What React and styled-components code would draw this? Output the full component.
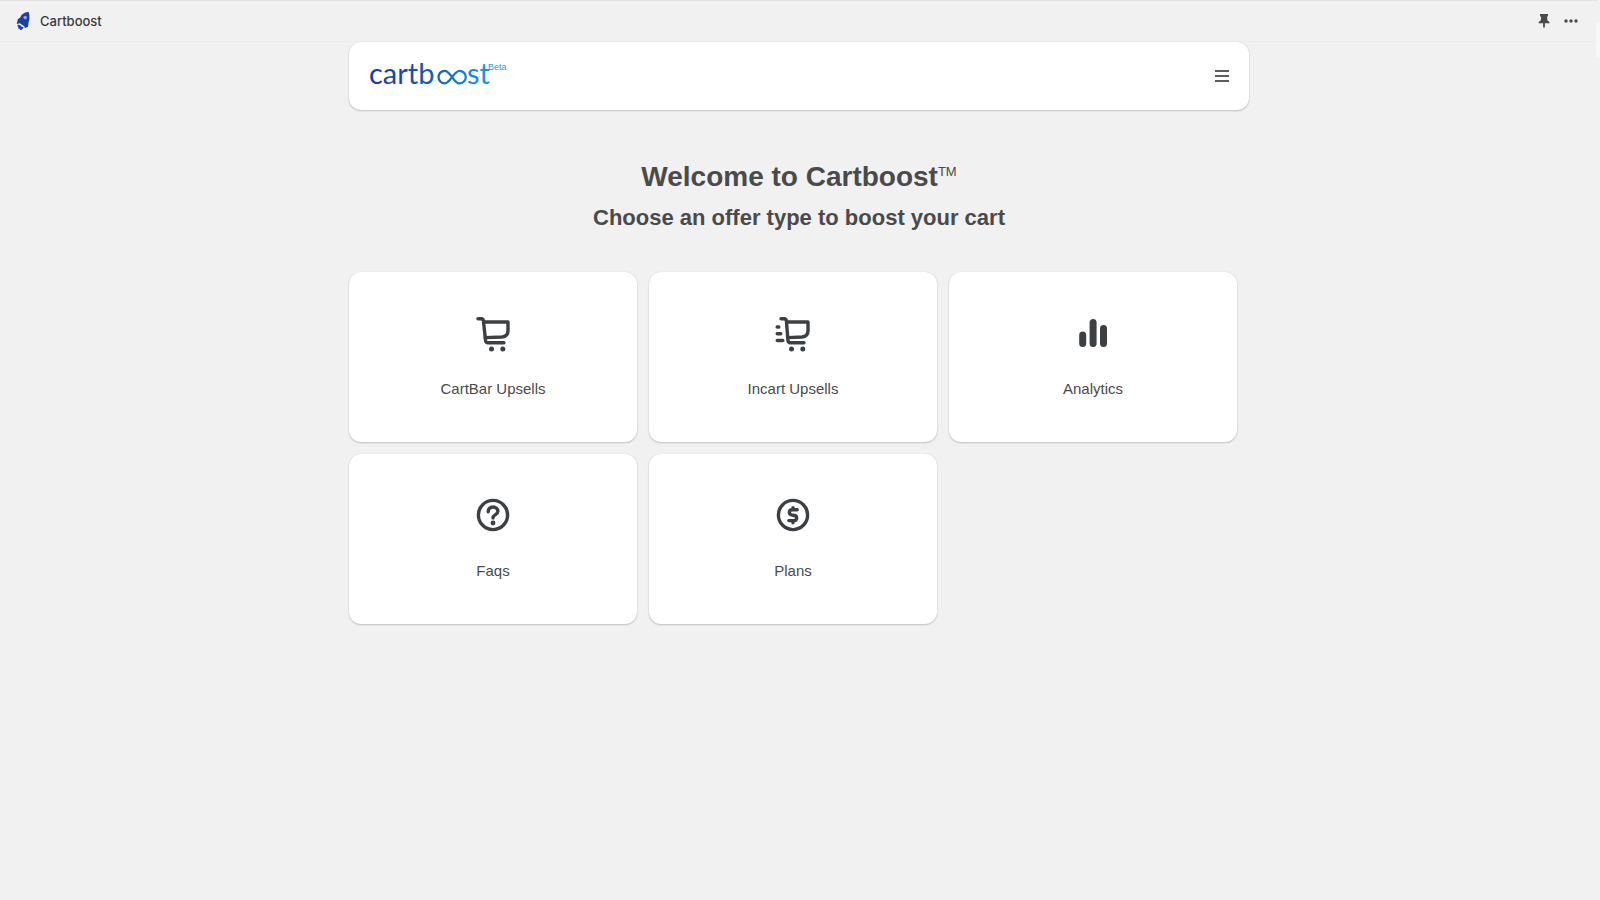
import React from 'react'
import styled, { createGlobalStyle } from 'styled-components'

const menus = [
  { name: 'CartBar Upsells', href: '#cartbar', icon: <CartIcon /> },
  { name: 'Incart Upsells', href: '#incart', icon: <FastCartIcon /> },
  { name: 'Analytics', href: '#analytics', icon: <BarsIcon /> },
  { name: 'Faqs', href: '#faqs', icon: <QuestionIcon /> },
  { name: 'Plans', href: '#plans', icon: <DollarIcon /> },
]

function App() {
  return (
    <StPage>
      <GlobalStyle />
      <StTopBar>
        <StAppName>
          <RocketIcon />
          <span>Cartboost</span>
        </StAppName>
        <StTopActions>
          <StIconButton type="button" aria-label="Pin">
            <PinIcon />
          </StIconButton>
          <StIconButton type="button" aria-label="More">
            <DotsIcon />
          </StIconButton>
        </StTopActions>
      </StTopBar>

      <StContainer>
        <StHeader>
          <Logo />
          <StIconButton type="button" aria-label="Menu">
            <MenuIcon />
          </StIconButton>
        </StHeader>

        <StTitle>
          Welcome to Cartboost<StMark>TM</StMark>
        </StTitle>
        <StSubTitle>Choose an offer type to boost your cart</StSubTitle>

        <StGrid>
          {menus.map((menu) => (
            <StCard key={menu.name} href={menu.href}>
              {menu.icon}
              <StCardName>{menu.name}</StCardName>
            </StCard>
          ))}
        </StGrid>
      </StContainer>
      <StScrollThumb />
    </StPage>
  )
}

export default App

function Logo() {
  return (
    <StLogo width="144" height="32" viewBox="0 0 144 32">
      <defs>
        <linearGradient id="logoColor" gradientUnits="userSpaceOnUse" x1="0" y1="0" x2="120" y2="0">
          <stop offset="0" stopColor="#1a3a9e" />
          <stop offset="0.5" stopColor="#1659b8" />
          <stop offset="1" stopColor="#1b9ae0" />
        </linearGradient>
      </defs>
      <text x="0" y="24" fill="url(#logoColor)">cartb</text>
      <path
        d="M83.300 17.300C80.300 13.300 78.800 10.800 75.800 10.800a6.300 6.300 0 0 0 0 12.600c5.500 0 9-12.600 14.700-12.600a6.300 6.300 0 0 1 0 12.600c-3 0-4.700-2.400-7.200-6.100"
        fill="none"
        stroke="url(#logoColor)"
        strokeWidth="2.300"
      />
      <text x="98" y="24" fill="url(#logoColor)">st</text>
      <StBeta x="119" y="10" fill="#2f97dc">Beta</StBeta>
    </StLogo>
  )
}

function RocketIcon() {
  return (
    <svg width="14" height="20" viewBox="0 0 14 20">
      <path d="M12.800 1C8.800 1 5.600 3 4.200 6.400L1.800 8.200.7 13l3.100-.8 4.700 3.300.2 1.700 3.300-1.400.6-4.400c1.100-2.800 1.200-7 .2-10.400z" fill="#1b3fa8" />
      <path d="M1.300 14c1.200-.7 2.500-.3 3.300.5.700 1 1.700 1.600 3 1.700-.2 1.500-1.500 2.500-3.600 2.800l-.5-1.400-1.400.1.200-1.500z" fill="#1b3fa8" />
      <circle cx="9.200" cy="6.600" r="1.800" fill="#8fa6dc" />
    </svg>
  )
}

function PinIcon() {
  return (
    <svg width="12" height="14" viewBox="0 0 12 14" fill="#4a4a4a">
      <path d="M2 0h8v2.400H9l.4 4c1.300.4 2.200 1.200 2.200 2.800H.6c0-1.600.9-2.400 2.200-2.800l.4-4H2zM5.100 9h1.800v4l-.9 1-.9-1z" />
    </svg>
  )
}

function DotsIcon() {
  return (
    <svg width="14" height="4" viewBox="0 0 14 4" fill="#4a4a4a">
      <circle cx="2" cy="2" r="1.700" />
      <circle cx="7" cy="2" r="1.700" />
      <circle cx="12" cy="2" r="1.700" />
    </svg>
  )
}

function MenuIcon() {
  return (
    <svg width="14" height="14" viewBox="0 0 14 14" fill="#5c5f62">
      <path d="M0 1h14v2H0zM0 6h14v2H0zM0 11h14v2H0z" />
    </svg>
  )
}

function CartIcon() {
  return (
    <StCardIcon viewBox="0 0 40 40">
      <path d="M5 4.800h3.200q2 0 2.200 2l2.200 20q.3 2 2.300 2H31" />
      <path d="M10.800 8H35v8.500q0 6-6 6.500l-16.800.6" />
      <circle cx="18.500" cy="35" r="2.500" />
      <circle cx="29.800" cy="35" r="2.500" />
    </StCardIcon>
  )
}

function FastCartIcon() {
  return (
    <StCardIcon viewBox="0 0 40 40">
      <path d="M8 4.800h3.200q2 0 2.200 2l1.600 20q.3 2 2.300 2H31" />
      <path d="M13.800 8H35v8.500q0 6-6 6.500l-14 .6" />
      <path d="M4.200 13h1.600M4.200 19.800h3.600M4.200 26.500h5.600" />
      <circle cx="18.500" cy="35" r="2.500" />
      <circle cx="29.800" cy="35" r="2.500" />
    </StCardIcon>
  )
}

function BarsIcon() {
  return (
    <StCardIcon viewBox="0 0 40 40">
      <rect x="6.200" y="17.500" width="7" height="15.500" rx="3.500" />
      <rect x="16.600" y="5" width="7" height="28" rx="3.500" />
      <rect x="27" y="11" width="7" height="22" rx="3.500" />
    </StCardIcon>
  )
}

function QuestionIcon() {
  return (
    <StCardIcon viewBox="0 0 40 40">
      <path d="M34.600 19a14.600 14.600 0 1 1-29.200 0a14.600 14.600 0 1 1 29.200 0z" />
      <path d="M15.200 15.800c0-3 2.100-4.800 4.800-4.800s4.900 1.800 4.900 4.300c0 3.400-4.900 3.400-4.900 6.700" />
      <circle cx="20" cy="27" r="2.400" />
    </StCardIcon>
  )
}

function DollarIcon() {
  return (
    <StCardIcon viewBox="0 0 40 40">
      <path d="M34.600 19a14.600 14.600 0 1 1-29.200 0a14.600 14.600 0 1 1 29.200 0z" />
      <path d="M24.200 13.700h-5.400a2.600 2.600 0 0 0-.5 5.100l3.400.7a2.600 2.600 0 0 1-.5 5.100h-5.400M20 11.600v2M20 24.800v2" />
    </StCardIcon>
  )
}

const GlobalStyle = createGlobalStyle`
  * {
    box-sizing: border-box;
  }
  body {
    margin: 0;
    background: #f1f1f1;
    color: #4a4a4a;
    font-family: "Liberation Sans", Arial, sans-serif;
  }
`
const StPage = styled.div`
  position: relative;
  min-height: 100vh;
  padding-right: 2px;
`
const StScrollThumb = styled.div`
  position: absolute;
  top: 22px;
  right: 0;
  width: 4px;
  height: 36px;
  border-radius: 2px;
  background: #f8f8f8;
`
const StTopBar = styled.header`
  height: 42px;
  padding: 0 20px 0 16px;
  border-top: 1px solid #e3e3e3;
  border-bottom: 1px solid #ececec;
  display: flex;
  align-items: center;
  justify-content: space-between;
`
const StAppName = styled.div`
  display: flex;
  align-items: center;
  gap: 10px;
  font-family: Inter, sans-serif;
  font-size: 13px;
  font-weight: 500;
  color: #3a3a3a;
`
const StTopActions = styled.div`
  display: flex;
  align-items: center;
  gap: 14px;
`
const StIconButton = styled.button`
  padding: 0;
  border: none;
  background: none;
  display: flex;
  align-items: center;
  justify-content: center;
  cursor: pointer;
`
const StContainer = styled.main`
  width: 100%;
  max-width: 900px;
  margin: 0 auto;
  padding-bottom: 40px;
`
const StHeader = styled.div`
  height: 68px;
  padding: 0 20px;
  border-radius: 12px;
  background: #ffffff;
  box-shadow: 0 1px 2px rgba(0, 0, 0, 0.2), 0 0 1px rgba(0, 0, 0, 0.14);
  display: flex;
  align-items: center;
  justify-content: space-between;
`
const StLogo = styled.svg`
  font-family: Lato, sans-serif;
  font-size: 29px;
  overflow: visible;
`
const StBeta = styled.text`
  font-family: "Liberation Sans", Arial, sans-serif;
  font-size: 9px;
`
const StTitle = styled.h1`
  margin: 48px 0 0;
  font-size: 28px;
  line-height: 38px;
  text-align: center;
`
const StMark = styled.sup`
  font-size: 13px;
  font-weight: 400;
  line-height: 0;
`
const StSubTitle = styled.h2`
  margin: 6px 0 38px;
  font-size: 22px;
  line-height: 32px;
  text-align: center;
`
const StGrid = styled.nav`
  display: grid;
  grid-template-columns: repeat(3, 1fr);
  gap: 12px;
  padding-right: 12px;
`
const StCard = styled.a`
  padding: 42px 16px;
  border-radius: 12px;
  background: #ffffff;
  box-shadow: 0 1px 2px rgba(0, 0, 0, 0.2), 0 0 1px rgba(0, 0, 0, 0.14);
  color: #4a4a4a;
  text-decoration: none;
  display: flex;
  flex-direction: column;
  align-items: center;
  gap: 24px;
`
const StCardIcon = styled.svg`
  width: 40px;
  height: 40px;
  fill: none;
  stroke: #3d4043;
  stroke-width: 3.4px;
  stroke-linecap: round;
  stroke-linejoin: round;

  circle,
  rect {
    fill: #3d4043;
    stroke: none;
  }
`
const StCardName = styled.span`
  font-size: 15px;
  line-height: 22px;
`
